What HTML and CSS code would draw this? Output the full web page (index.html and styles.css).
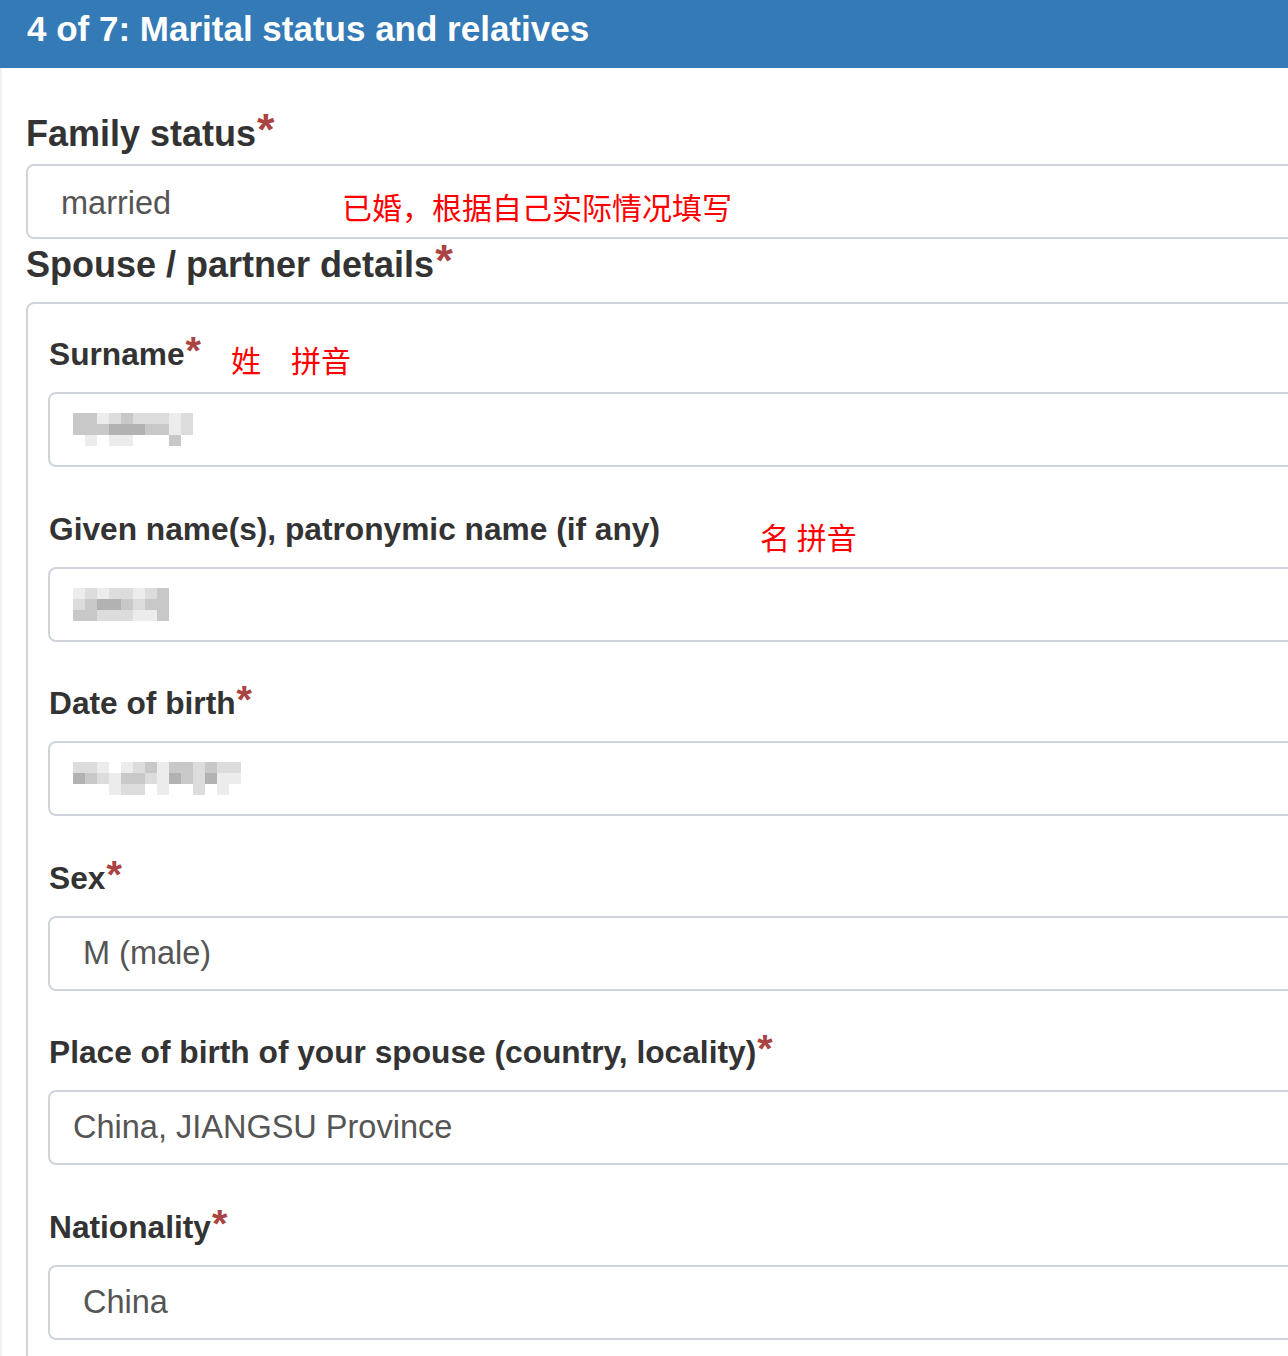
FILE: index.html
```html
<!DOCTYPE html>
<html lang="en">
<head>
<meta charset="utf-8">
<title>4 of 7: Marital status and relatives</title>
<link rel="stylesheet" href="styles.css">
</head>
<body>
<div class="panel">
  <div class="panel-heading">4 of 7: Marital status and relatives</div>
  <div class="panel-body">
    <div class="top-label family-label">Family status<span class="req">*</span></div>
    <div class="control select family-control">
      <span class="value family-value">married</span>
      <span class="note note-family">已婚，根据自己实际情况填写</span>
    </div>
    <div class="top-label spouse-label">Spouse / partner details<span class="req">*</span></div>
    <fieldset class="spouse">
      <div class="group">
        <div class="label-row">
          <label>Surname<span class="req">*</span></label>
          <span class="note note-surname">姓　拼音</span>
        </div>
        <div class="control text">
          <div class="mosaic cols10">
            <i class="c3"></i><i class="c3"></i><i class="c1"></i><i class="c2"></i><i class="c3"></i><i class="c2"></i><i class="c2"></i><i class="c2"></i><i class="c1"></i><i class="c2"></i>
            <i class="c3"></i><i class="c3"></i><i class="c3"></i><i class="c4"></i><i class="c4"></i><i class="c4"></i><i class="c3"></i><i class="c3"></i><i class="c1"></i><i class="c2"></i>
            <i class="c0"></i><i class="c1"></i><i class="c0"></i><i class="c1"></i><i class="c1"></i><i class="c0"></i><i class="c0"></i><i class="c0"></i><i class="c3"></i><i class="c0"></i>
          </div>
        </div>
      </div>
      <div class="group">
        <div class="label-row">
          <label>Given name(s), patronymic name (if any)</label>
          <span class="note note-given">名 拼音</span>
        </div>
        <div class="control text">
          <div class="mosaic cols8">
            <i class="c1"></i><i class="c2"></i><i class="c1"></i><i class="c2"></i><i class="c2"></i><i class="c1"></i><i class="c2"></i><i class="c3"></i>
            <i class="c2"></i><i class="c3"></i><i class="c4"></i><i class="c4"></i><i class="c3"></i><i class="c2"></i><i class="c3"></i><i class="c3"></i>
            <i class="c3"></i><i class="c3"></i><i class="c2"></i><i class="c2"></i><i class="c2"></i><i class="c1"></i><i class="c1"></i><i class="c3"></i>
          </div>
        </div>
      </div>
      <div class="group">
        <div class="label-row">
          <label>Date of birth<span class="req">*</span></label>
        </div>
        <div class="control text">
          <div class="mosaic cols14">
            <i class="c2"></i><i class="c2"></i><i class="c1"></i><i class="c0"></i><i class="c1"></i><i class="c2"></i><i class="c3"></i><i class="c1"></i><i class="c3"></i><i class="c3"></i><i class="c2"></i><i class="c3"></i><i class="c2"></i><i class="c2"></i>
            <i class="c4"></i><i class="c3"></i><i class="c2"></i><i class="c1"></i><i class="c3"></i><i class="c3"></i><i class="c2"></i><i class="c1"></i><i class="c4"></i><i class="c3"></i><i class="c2"></i><i class="c4"></i><i class="c1"></i><i class="c1"></i>
            <i class="c0"></i><i class="c0"></i><i class="c0"></i><i class="c1"></i><i class="c2"></i><i class="c2"></i><i class="c0"></i><i class="c1"></i><i class="c0"></i><i class="c0"></i><i class="c2"></i><i class="c0"></i><i class="c1"></i><i class="c0"></i>
          </div>
        </div>
      </div>
      <div class="group">
        <div class="label-row">
          <label>Sex<span class="req">*</span></label>
        </div>
        <div class="control select">
          <span class="value">M (male)</span>
        </div>
      </div>
      <div class="group">
        <div class="label-row">
          <label>Place of birth of your spouse (country, locality)<span class="req">*</span></label>
        </div>
        <div class="control text">
          <span class="value">China, JIANGSU Province</span>
        </div>
      </div>
      <div class="group">
        <div class="label-row">
          <label>Nationality<span class="req">*</span></label>
        </div>
        <div class="control select">
          <span class="value">China</span>
        </div>
      </div>
    </fieldset>
  </div>
</div>
</body>
</html>
```

FILE: styles.css
```css
html, body {
  margin: 0;
  padding: 0;
  background: #ffffff;
  overflow: hidden;
}

body {
  font-family: "Liberation Sans", Arial, sans-serif;
  color: #333333;
}

.panel {
  width: 1500px;
}

.panel-heading {
  height: 68px;
  box-sizing: border-box;
  background: #337ab7;
  color: #ffffff;
  font-weight: bold;
  font-size: 35px;
  line-height: 57px;
  padding-left: 27px;
}

.panel-body {
  border-left: 2px solid #f2f2f2;
  padding: 46px 0 40px 24px;
}

.top-label {
  font-weight: bold;
  font-size: 36px;
  line-height: 40px;
  color: #333333;
}

.req {
  color: #a94442;
  font-size: 1.25em;
  line-height: 0;
  vertical-align: 0.02em;
  margin-left: 1px;
}

.control {
  height: 75px;
  box-sizing: border-box;
  border: 2px solid #cfd4dc;
  border-radius: 8px;
  background: #ffffff;
  display: flex;
  align-items: center;
  color: #555555;
  font-size: 32.5px;
}

.control.text {
  padding-left: 23px;
}

.control.select {
  padding-left: 33px;
}

.family-control {
  margin-top: 10px;
}

.family-value {
  width: 281px;
  flex: none;
  padding-top: 3px;
}

.note {
  font-family: "Noto Sans CJK SC", "Noto Sans CJK JP", sans-serif;
  color: #ff0000;
  font-size: 30px;
  line-height: 36px;
  font-weight: 400;
}

.note-family {
  padding-top: 9px;
}

.spouse-label {
  margin-top: 6px;
}

.spouse {
  margin: 17px 0 0 0;
  padding: 32px 20px 0 20px;
  border: 2px solid #cfd4dc;
  border-radius: 8px;
  min-width: 0;
}

.group {
  margin-bottom: 43.5px;
}

.label-row {
  display: flex;
  align-items: flex-start;
  margin-bottom: 20px;
  height: 36px;
}

.label-row label {
  font-weight: bold;
  font-size: 31.7px;
  line-height: 36px;
  color: #333333;
  padding-left: 1px;
}

.note-surname {
  margin-left: 30px;
  padding-top: 5px;
}

.note-given {
  margin-left: 100px;
  padding-top: 7px;
}

.mosaic {
  display: grid;
  grid-auto-rows: 11px;
}

.mosaic.cols10 { grid-template-columns: repeat(10, 12px); }
.mosaic.cols8 { grid-template-columns: repeat(8, 12px); }
.mosaic.cols14 { grid-template-columns: repeat(14, 12px); }

.mosaic i {
  display: block;
}

.c0 { background: transparent; }
.c1 { background: #ececec; }
.c2 { background: #dcdcdc; }
.c3 { background: #c8c8c8; }
.c4 { background: #b2b2b2; }
```
